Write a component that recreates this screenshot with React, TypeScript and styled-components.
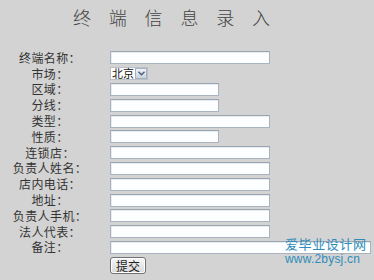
import React from "react";
import styled, { createGlobalStyle } from "styled-components";

const Global = createGlobalStyle`
  html, body { margin: 0; padding: 0; background: #d3d3d3; }
  body { font-family: "Noto Sans CJK SC", "Noto Sans", sans-serif; }
`;

const Page = styled.div`
  position: relative;
  width: 374px;
  height: 280px;
  overflow: hidden;
  background: #d3d3d3;
`;

const Title = styled.h1`
  margin: 0;
  padding: 6px 0 0 73px;
  font-family: "Noto Sans CJK SC", serif;
  font-weight: 300;
  font-size: 18px;
  line-height: 22px;
  letter-spacing: 17.8px;
  color: #444;
  white-space: nowrap;
`;

const Form = styled.form`
  display: grid;
  grid-template-columns: 100px 1fr;
  grid-auto-rows: 15.8px;
  column-gap: 10px;
  align-items: center;
  margin-top: 22px;
`;

const Label = styled.label`
  text-align: center;
  font-size: 12px;
  line-height: 14px;
  letter-spacing: 0.4px;
  color: #333;
  white-space: nowrap;
`;

const Field = styled.input<{ $w: number }>`
  box-sizing: border-box;
  width: ${(p) => p.$w}px;
  height: 13px;
  margin: 0;
  padding: 0 2px;
  border: 1px solid #a9b3bf;
  border-top-color: #9aa5b2;
  background: #fdfeff;
  box-shadow: inset 1px 1px 0 #e6ecf2;
  outline: none;
`;

const SelectBox = styled.div`
  box-sizing: border-box;
  display: flex;
  align-items: center;
  width: 38px;
  height: 13px;
  background: #fff;
  border: 1px solid #b9c0c9;
`;

const SelectText = styled.span`
  flex: 1;
  font-size: 11px;
  line-height: 11px;
  padding-left: 1px;
  color: #111;
  white-space: nowrap;
`;

const SelectArrow = styled.span`
  display: flex;
  align-items: center;
  justify-content: center;
  width: 12px;
  height: 11px;
  background: linear-gradient(#f0f3f8, #c9d2de);
  border: 1px solid #a6b0be;
  box-sizing: border-box;
`;

const ButtonRow = styled.div`
  display: flex;
  padding: 2px 0 0 110px;
`;

const Button = styled.button`
  box-sizing: border-box;
  width: 36px;
  height: 17px;
  padding: 0;
  font-family: "Noto Sans CJK SC", sans-serif;
  font-size: 12px;
  line-height: 14px;
  color: #222;
  border: 1px solid #6f7378;
  border-radius: 3px;
  background: linear-gradient(#f7f7f7, #d9d9d9);
  box-shadow: inset 0 0 0 1px #fff;
`;

const Watermark = styled.div`
  position: absolute;
  left: 285px;
  top: 235px;
  display: flex;
  flex-direction: column;
  align-items: flex-start;
  color: #2f8cb8;
`;

const MarkCn = styled.span`
  font-family: "Noto Sans CJK SC", sans-serif;
  font-size: 13px;
  line-height: 17px;
  letter-spacing: 0.6px;
  font-weight: 400;
`;

const MarkUrl = styled.span`
  font-family: "Liberation Sans", sans-serif;
  font-size: 12px;
  line-height: 14px;
  letter-spacing: 0.2px;
`;

type Row = { label: string; w: number; select?: boolean };

const rows: Row[] = [
  { label: "终端名称：", w: 160 },
  { label: "市场：", w: 0, select: true },
  { label: "区域：", w: 109 },
  { label: "分线：", w: 109 },
  { label: "类型：", w: 160 },
  { label: "性质：", w: 109 },
  { label: "连锁店：", w: 160 },
  { label: "负责人姓名：", w: 160 },
  { label: "店内电话：", w: 160 },
  { label: "地址：", w: 160 },
  { label: "负责人手机：", w: 160 },
  { label: "法人代表：", w: 160 },
  { label: "备注：", w: 261 },
];

export default function App() {
  return (
    <Page>
      <Global />
      <Title>终端信息录入</Title>
      <Form onSubmit={(e) => e.preventDefault()}>
        {rows.map((r) => (
          <React.Fragment key={r.label}>
            <Label>{r.label}</Label>
            {r.select ? (
              <SelectBox>
                <SelectText>北京</SelectText>
                <SelectArrow>
                  <svg width="7" height="5" viewBox="0 0 7 5">
                    <path d="M0.5 0.8 L3.5 3.8 L6.5 0.8" fill="none" stroke="#4a5a78" strokeWidth="1.4" />
                  </svg>
                </SelectArrow>
              </SelectBox>
            ) : (
              <Field $w={r.w} type="text" />
            )}
          </React.Fragment>
        ))}
      </Form>
      <ButtonRow>
        <Button type="submit">提交</Button>
      </ButtonRow>
      <Watermark>
        <MarkCn>爱毕业设计网</MarkCn>
        <MarkUrl>www.2bysj.cn</MarkUrl>
      </Watermark>
    </Page>
  );
}
